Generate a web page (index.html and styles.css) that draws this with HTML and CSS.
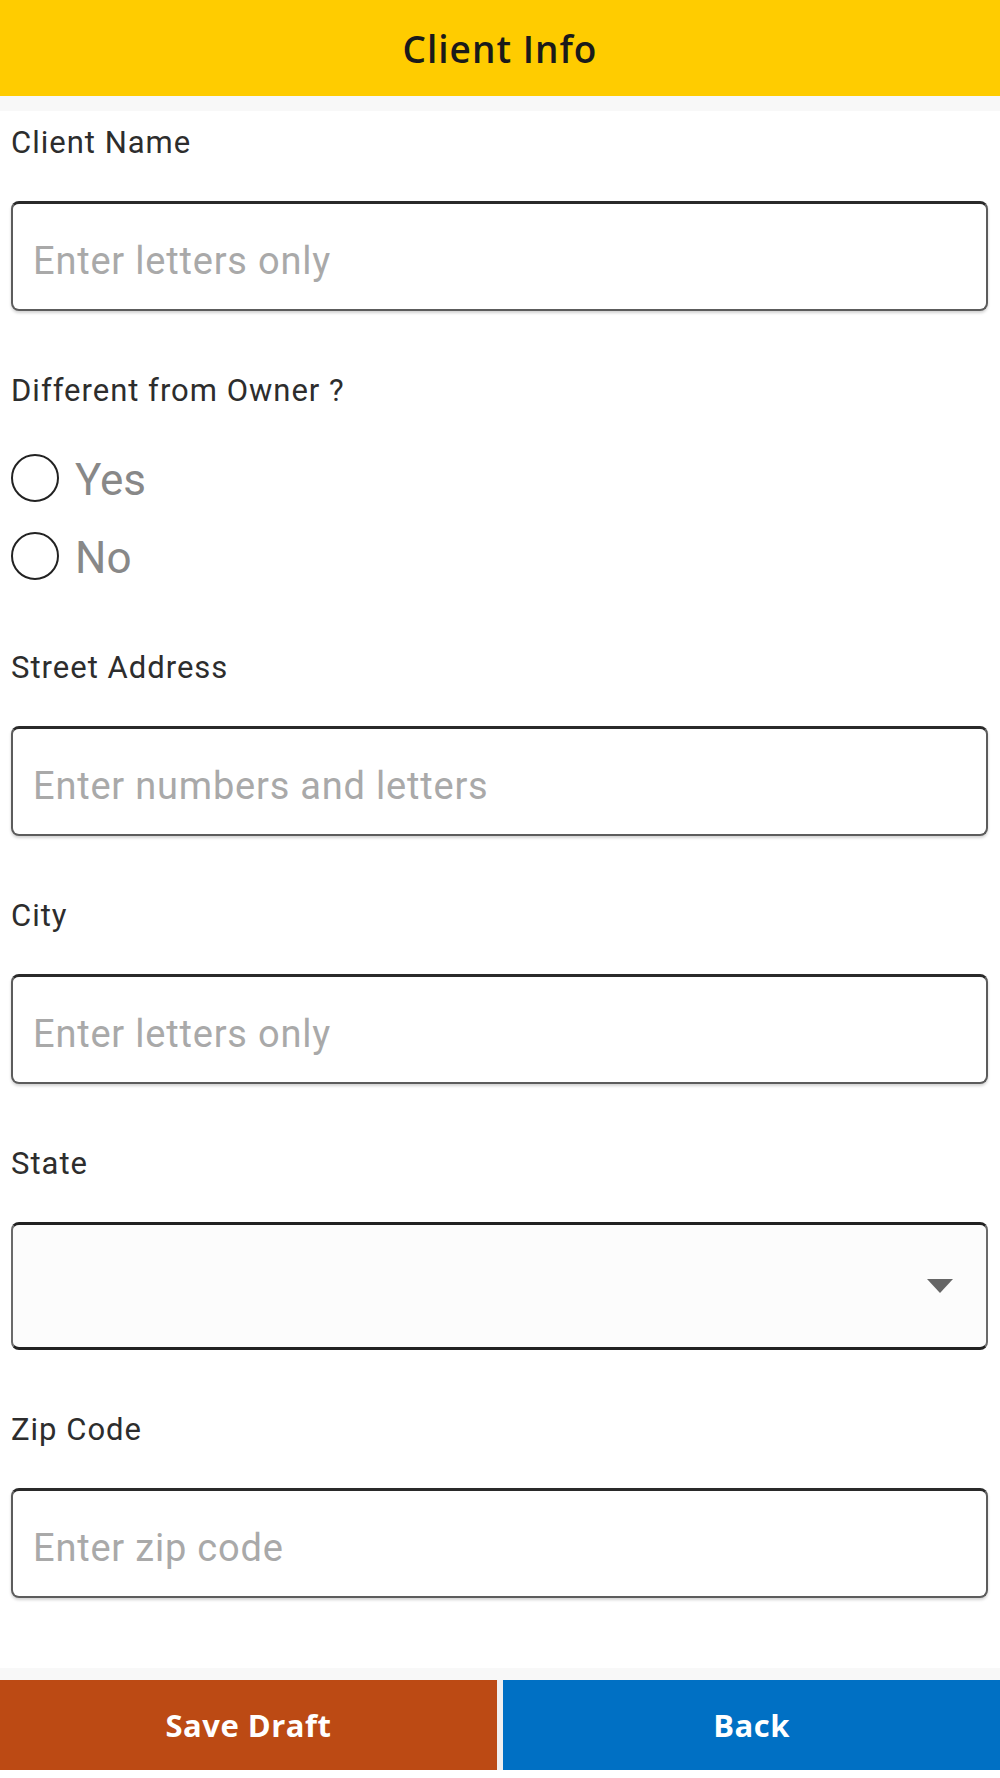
FILE: index.html
```html
<!DOCTYPE html>
<html lang="en">
<head>
    <meta charset="UTF-8">
    <meta name="viewport" content="width=device-width, initial-scale=1.0">
    <title>Client Info</title>
    <link rel="stylesheet" href="styles.css">
</head>
<body>

<header class="topbar">
    <h1>Client Info</h1>
</header>

<form class="container">
    <div class="field">
        <label for="clientName">Client Name</label>
        <input type="text" id="clientName" class="text-input" placeholder="Enter letters only">
    </div>

    <div class="field field-radio">
        <label>Different from Owner ?</label>
        <div class="radio-list">
            <label class="radio-row"><input type="radio" name="diffOwner" value="yes"><span>Yes</span></label>
            <label class="radio-row"><input type="radio" name="diffOwner" value="no"><span>No</span></label>
        </div>
    </div>

    <div class="field">
        <label for="street">Street Address</label>
        <input type="text" id="street" class="text-input" placeholder="Enter numbers and letters">
    </div>

    <div class="field">
        <label for="city">City</label>
        <input type="text" id="city" class="text-input" placeholder="Enter letters only">
    </div>

    <div class="field">
        <label for="state">State</label>
        <div class="select-wrap">
            <select id="state" class="select-input">
                <option value=""></option>
            </select>
            <svg class="select-arrow" width="26" height="14" viewBox="0 0 26 14"><path d="M0 0 H26 L13 14 Z" fill="#666"/></svg>
        </div>
    </div>

    <div class="field field-last">
        <label for="zip">Zip Code</label>
        <input type="text" id="zip" class="text-input" placeholder="Enter zip code">
    </div>
</form>

<footer class="actions">
    <button type="button" class="btn btn-draft">Save Draft</button>
    <button type="button" class="btn btn-back">Back</button>
</footer>

</body>
</html>
```

FILE: styles.css
```css
body {
    font-family: Roboto, "Liberation Sans", sans-serif;
    margin: 0;
    padding: 0;
    background-color: #fff;
    color: #333;
}
.topbar {
    height: 96px;
    background-color: #ffcc00; /* yellow title bar */
    border-bottom: 15px solid #f8f8f8;
    display: flex;
    align-items: center;
    justify-content: center;
}
.topbar h1 {
    margin: 0;
    font-family: "Open Sans", sans-serif;
    font-weight: 600;
    font-size: 37px;
    letter-spacing: 1px;
    color: #1a1a1a;
}
.container {
    padding: 12px 12px 0 11px;
}
.field {
    margin-bottom: 60px;
}
.field > label {
    display: block;
    font-size: 31px;
    line-height: 40px;
    letter-spacing: 1px;
    color: #2d2d2d;
    margin-bottom: 38px;
}
.field-radio > label {
    margin-bottom: 37px;
}
.field-radio {
    margin-bottom: 62px;
}
.field-last {
    margin-bottom: 70px;
}
.text-input {
    display: block;
    box-sizing: border-box;
    width: 100%;
    height: 110px;
    padding: 8px 20px 0;
    border: 2px solid #5c5c5c;
    border-top: 3px solid #2a2a2a;
    border-radius: 8px;
    box-shadow: 0 2px 3px rgba(0, 0, 0, 0.18);
    font-family: Roboto, sans-serif;
    font-size: 38px;
    letter-spacing: 0.8px;
    color: #333;
    background: #fff;
    outline: none;
}
.text-input::placeholder {
    color: #a9a9a9;
}
.radio-list {
    display: flex;
    flex-direction: column;
    gap: 18px;
}
.radio-row {
    display: flex;
    align-items: center;
    height: 60px;
    gap: 16px;
    font-size: 44px;
    color: #888;
}
.radio-row span {
    padding-top: 3px;
}
.radio-row input {
    appearance: none;
    -webkit-appearance: none;
    margin: 0;
    width: 48px;
    height: 48px;
    border: 2.5px solid #222;
    border-radius: 50%;
    box-sizing: border-box;
    background: #fff;
}
.select-wrap {
    position: relative;
}
.select-input {
    appearance: none;
    -webkit-appearance: none;
    display: block;
    box-sizing: border-box;
    width: 100%;
    height: 128px;
    border: 2px solid #6a6a6a;
    border-top: 3px solid #222;
    border-bottom: 3px solid #222;
    border-radius: 8px;
    background-color: #fcfcfc;
    font-size: 36px;
    padding: 0 22px;
}
.select-arrow {
    position: absolute;
    right: 35px;
    top: 57px;
}
.actions {
    display: grid;
    grid-template-columns: 1fr 1fr;
    gap: 6px;
    border-top: 12px solid #f8f8f8;
    background-color: #f0f0f0;
    margin-bottom: 8px;
}
.btn {
    height: 90px;
    border: none;
    font-family: "Open Sans", sans-serif;
    font-weight: 700;
    font-size: 31px;
    letter-spacing: 0.5px;
    color: #fff;
    cursor: pointer;
}
.btn-draft {
    background-color: #bc4a14; /* burnt orange */
}
.btn-back {
    background-color: #0070c4; /* blue */
}
```
